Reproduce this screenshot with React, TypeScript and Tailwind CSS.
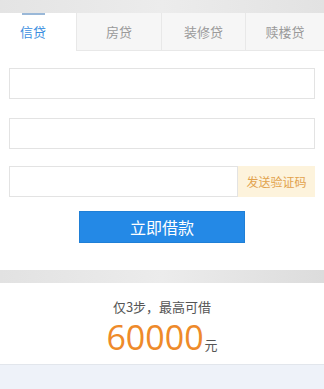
const font = { fontFamily: '"Noto Sans CJK SC", "Liberation Sans", sans-serif' };

const tabs = [
  { label: "信贷", w: "w-[76px]" },
  { label: "房贷", w: "w-[85px]" },
  { label: "装修贷", w: "w-[84px]" },
  { label: "赎楼贷", w: "w-[79px]" },
];

export default function App() {
  return (
    <div className="w-[324px] h-[389px] bg-white overflow-hidden" style={font}>
      <div className="h-[13px] bg-gradient-to-r from-[#e4e4e4] via-[#ececec] to-[#e2e2e2]" />
      <div className="flex h-[38px]">
        {tabs.map((t, i) => (
          <div
            key={t.label}
            className={
              i === 0
                ? `${t.w} relative flex items-center justify-center pr-[10px] bg-white text-[13px] text-[#3a8ee0]`
                : `${t.w} flex items-center justify-center bg-[#f6f6f6] border-l border-b border-[#e8e8e8] text-[13px] text-[#9a9a9a]`
            }
          >
            {i === 0 && <div className="absolute top-0 left-[22px] w-[23px] h-[2px] bg-[#9ab8d8]" />}
            {t.label}
          </div>
        ))}
      </div>
      <div className="flex flex-col px-[9px] pt-[17px] gap-[19px]">
        <div className="h-[31px] border border-[#e3e3e3]" />
        <div className="h-[31px] border border-[#e3e3e3]" />
        <div className="flex h-[31px] -mt-[2px]">
          <div className="flex-1 border border-[#e3e3e3]" />
          <div className="w-[77px] bg-[#fdf3dc] text-[#e2a24c] text-[12px] flex items-center justify-center">
            发送验证码
          </div>
        </div>
      </div>
      <div className="flex justify-center mt-[14px]">
        <div className="w-[166px] h-[32px] bg-[#2489e6] text-white text-[16px] flex items-center justify-center border border-[#1f7fd6]">
          立即借款
        </div>
      </div>
      <div className="mt-[27px] h-[13px] bg-gradient-to-r from-[#e2e2e2] via-[#ececec] to-[#dcdcdc]" />
      <div className="flex flex-col items-center pt-[15px] h-[82px] border-b border-[#e2e6ec]">
        <div className="text-[13px] text-[#555] leading-[18px]">仅3步，最高可借</div>
        <div className="flex items-end mt-[2px] h-[38px]">
          <span
            className="text-[34px] text-[#ee8a2a] leading-[38px]"
            style={{ fontFamily: '"Open Sans", "Liberation Sans", sans-serif' }}
          >
            60000
          </span>
          <span className="text-[13px] text-[#555] leading-[18px] ml-[1px] mb-[2px]">元</span>
        </div>
      </div>
      <div className="h-[40px] bg-[#eef2f9]" />
    </div>
  );
}
